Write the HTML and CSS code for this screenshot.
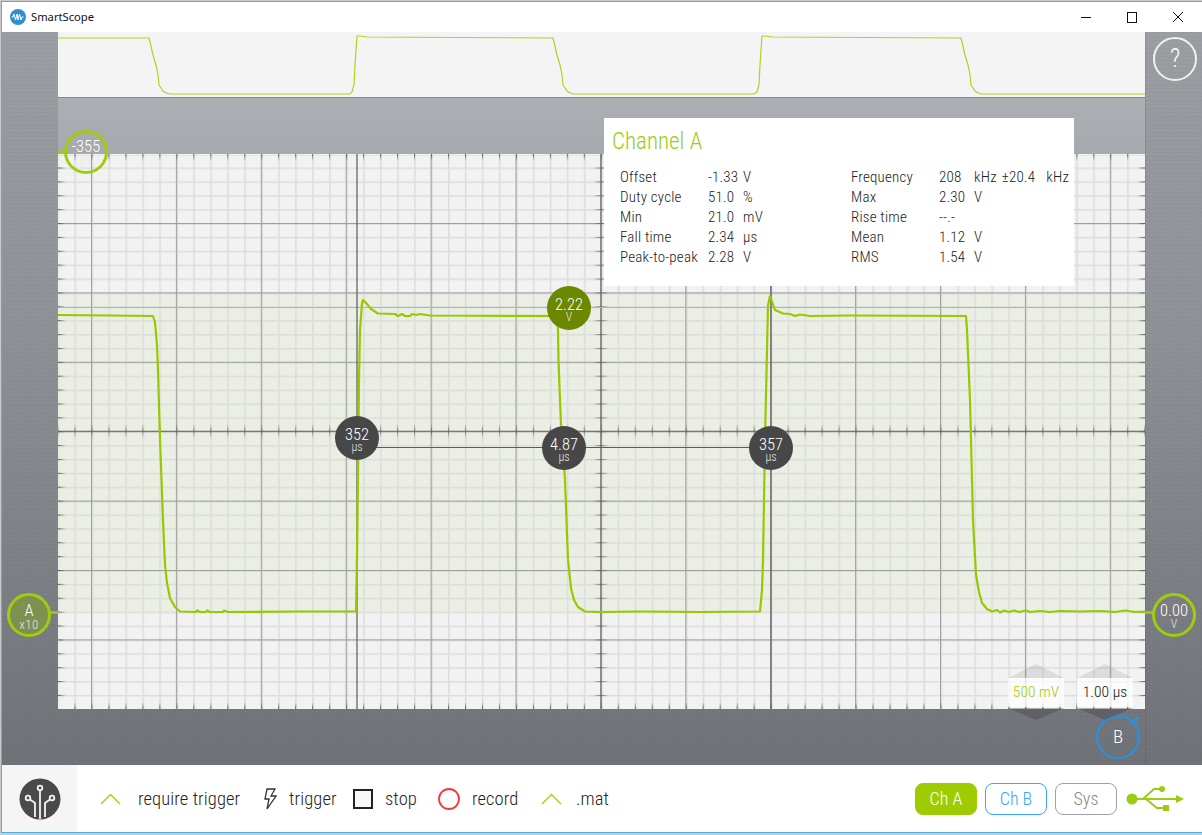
FILE: index.html
```html
<!DOCTYPE html>
<html lang="en">
<head>
<meta charset="utf-8">
<title>SmartScope</title>
<link rel="stylesheet" href="styles.css">
</head>
<body>
<div class="window">
  <header class="titlebar">
    <svg class="appicon" width="16" height="16" viewBox="0 0 16 16"><circle cx="8" cy="8" r="8" fill="#2f8fd0"/><path d="M1.500 8h1.500l1-3 1.500 6 1.500-6 1 6 1.500-6 1.500 6 1-3h1.500" fill="none" stroke="#fff" stroke-width="1"/></svg>
    <span class="apptitle">SmartScope</span>
    <div class="winbtns">
      <svg width="46" height="30" viewBox="0 0 46 30"><path d="M17 15.500h10" stroke="#111" fill="none"/></svg>
      <svg width="46" height="30" viewBox="0 0 46 30"><rect x="17.500" y="10.500" width="9" height="10" stroke="#111" fill="none"/></svg>
      <svg width="46" height="30" viewBox="0 0 46 30"><path d="M17 10l10 10M27 10l-10 10" stroke="#111" fill="none"/></svg>
    </div>
  </header>

  <main class="scope">
    <div class="rail rail-left"></div>
    <div class="center">
      <div class="overview">
        <svg width="1087" height="65" viewBox="58 32 1087 65">
          <polyline class="ovtrace" points="58,38 149,38 150,42 153,55 156,65 158,75 159,85 161,88 163,91 166,93 170,94 350,94 352,92 354,85 355,65 356,50 357,36 360,36 367,37 553,38 554,42 557,55 560,65 562,75 563,85 565,88 567,91 570,93 574,94 754,94 757,92 759,85 760,65 761,50 762,36 765,36 772,37 961,38 962,42 965,55 968,65 970,75 971,85 973,88 975,91 978,93 982,94 1145,94"/>
        </svg>
      </div>
      <div class="plot">
        <svg class="plotsvg" width="1087" height="555" viewBox="58 154 1087 555">
          <defs>
            <pattern id="minorV" patternUnits="userSpaceOnUse" x="57.45" y="0" width="16.98" height="20"><rect x="0" y="0" width="1.500" height="20" fill="#dcdcdc"/></pattern>
            <pattern id="minorH" patternUnits="userSpaceOnUse" x="0" y="153.6" width="20" height="13.88"><rect x="0" y="0" width="20" height="1.500" fill="#dcdcdc"/></pattern>
            <pattern id="majorV" patternUnits="userSpaceOnUse" x="91" y="0" width="84.9" height="20"><rect x="0" y="0" width="1.100" height="20" fill="#a0a0a0"/></pattern>
            <pattern id="majorH" patternUnits="userSpaceOnUse" x="0" y="153.6" width="20" height="69.4"><rect x="0" y="0" width="20" height="1.100" fill="#a0a0a0"/></pattern>
            <linearGradient id="fadeDown" x1="0" x2="0" y1="0" y2="1"><stop offset="0" stop-color="#555"/><stop offset="1" stop-color="#555" stop-opacity="0"/></linearGradient>
            <linearGradient id="fadeUp" x1="0" x2="0" y1="1" y2="0"><stop offset="0" stop-color="#555"/><stop offset="1" stop-color="#555" stop-opacity="0"/></linearGradient>
            <linearGradient id="fadeRight" x1="0" x2="1" y1="0" y2="0"><stop offset="0" stop-color="#555"/><stop offset="1" stop-color="#555" stop-opacity="0"/></linearGradient>
            <linearGradient id="fadeLeft" x1="1" x2="0" y1="0" y2="0"><stop offset="0" stop-color="#555"/><stop offset="1" stop-color="#555" stop-opacity="0"/></linearGradient>
            <linearGradient id="fadeMidV" x1="0" x2="0" y1="0" y2="1"><stop offset="0" stop-color="#555" stop-opacity="0"/><stop offset=".5" stop-color="#555" stop-opacity=".8"/><stop offset="1" stop-color="#555" stop-opacity="0"/></linearGradient>
            <linearGradient id="fadeMidH" x1="0" x2="1" y1="0" y2="0"><stop offset="0" stop-color="#555" stop-opacity="0"/><stop offset=".5" stop-color="#555" stop-opacity=".8"/><stop offset="1" stop-color="#555" stop-opacity="0"/></linearGradient>
            <pattern id="tickTop" patternUnits="userSpaceOnUse" x="57.45" y="154" width="16.98" height="555"><rect width="1.100" height="7" fill="url(#fadeDown)"/></pattern>
            <pattern id="tickBottom" patternUnits="userSpaceOnUse" x="57.45" y="154" width="16.98" height="555"><rect y="548" width="1.100" height="7" fill="url(#fadeUp)"/></pattern>
            <pattern id="tickLeft" patternUnits="userSpaceOnUse" x="58" y="153.6" width="1087" height="13.88"><rect width="8" height="1.100" fill="url(#fadeRight)"/></pattern>
            <pattern id="tickRight" patternUnits="userSpaceOnUse" x="58" y="153.6" width="1087" height="13.88"><rect x="1079" width="8" height="1.100" fill="url(#fadeLeft)"/></pattern>
            <pattern id="tickAxisH" patternUnits="userSpaceOnUse" x="57.45" y="424" width="16.98" height="14"><rect width="1.100" height="14" fill="url(#fadeMidV)"/></pattern>
            <pattern id="tickAxisV" patternUnits="userSpaceOnUse" x="593" y="153.6" width="16" height="13.88"><rect width="16" height="1.100" fill="url(#fadeMidH)"/></pattern>
          </defs>
          <rect x="58" y="154" width="1087" height="555" fill="#f2f2f2"/>
          <rect x="58" y="293" width="1087" height="319" fill="#ebeee3"/>
          <rect x="59" y="155" width="1085" height="553" fill="url(#minorV)"/>
          <rect x="59" y="155" width="1085" height="553" fill="url(#minorH)"/>
          <rect x="59" y="155" width="1085" height="553" fill="url(#majorV)"/>
          <rect x="59" y="155" width="1085" height="553" fill="url(#majorH)"/>
          <rect x="59" y="154" width="1085" height="555" fill="url(#tickTop)"/>
          <rect x="59" y="154" width="1085" height="555" fill="url(#tickBottom)"/>
          <rect x="58" y="155" width="1087" height="553" fill="url(#tickLeft)"/>
          <rect x="58" y="155" width="1087" height="553" fill="url(#tickRight)"/>
          <rect x="58" y="424" width="1087" height="14" fill="url(#tickAxisH)"/>
          <rect x="593" y="155" width="16" height="553" fill="url(#tickAxisV)"/>
          <path class="axis" d="M58 431.200H1145M601 154V709"/>
          <path class="levelline" d="M58 307.500H1145"/>
          <path class="cursorline" d="M357 154V709M771 154V709M357 447.500H771"/>
          <polyline class="trace" points="58,315 110,315.500 153,316 155,322 157,345 158,370 160,440 163,520 165,565 167,583 170,598 175,607 180,611.500 196,612 197,610.500 200,612 206,612 207,610.500 210,612 223,612 224,610.500 228,612 300,611.500 356,611.500 357,556 358,480 359,380 360,330 362,303 363,300 367,304 371,309 378,313.500 395,314 398,316 402,314 405,316 410,316 412,314 416,315 420,314 430,315.500 557,316 558,330 558.500,360 560,400 561,425 563,450 565,480 568,560 571,588 574,600 578,607 585,611.500 600,612 640,611.500 700,612 760,611.500 762,590 763,560 765,440 767,350 768,305 770,296 775,310 783,313.500 790,314 795,316 800,314.500 810,316 850,315.500 966,316 967,330 970,400 973,520 976,575 979,592 982,603 987,609 992,611.500 997,610 1000,612.500 1004,610.500 1009,612 1014,610.500 1019,612 1026,610.500 1030,612 1040,611 1050,612 1060,611 1080,611.500 1100,611 1115,612 1125,610.500 1135,612 1145,611.500"/>
        </svg>
      </div>
      <div class="plotgap"></div>
    </div>
    <div class="rail rail-right"></div>

    <svg class="stubs" width="1200" height="733" viewBox="2 32 1200 733">
      <path d="M50 612.500h8M1145 612.500h8M58 152h7" stroke="#a0cc10" stroke-width="2.500" fill="none"/>
      <path d="M1132 724l6-7" stroke="#1f95ea" stroke-width="2.500" fill="none"/>
    </svg>

    <section class="info">
      <h2 class="info-title">Channel A</h2>
      <div class="info-grid">
        <dl class="stats">
          <dt>Offset</dt><dd>-1.33</dd><dd class="u">V</dd>
          <dt>Duty cycle</dt><dd>51.0</dd><dd class="u">%</dd>
          <dt>Min</dt><dd>21.0</dd><dd class="u">mV</dd>
          <dt>Fall time</dt><dd>2.34</dd><dd class="u">µs</dd>
          <dt>Peak-to-peak</dt><dd>2.28</dd><dd class="u">V</dd>
        </dl>
        <dl class="stats">
          <dt>Frequency</dt><dd>208</dd><dd class="u">kHz<span class="pm">±20.4</span><span class="pmu">kHz</span></dd>
          <dt>Max</dt><dd>2.30</dd><dd class="u">V</dd>
          <dt>Rise time</dt><dd>--.-</dd><dd class="u"></dd>
          <dt>Mean</dt><dd>1.12</dd><dd class="u">V</dd>
          <dt>RMS</dt><dd>1.54</dd><dd class="u">V</dd>
        </dl>
      </div>
    </section>

    <div class="marker help"><span class="big">?</span></div>
    <div class="marker ring trig"><span class="num">-355</span><span class="unit">µs</span></div>
    <div class="marker ring chA"><span class="num">A</span><span class="unit wide">x10</span></div>
    <div class="marker ring off"><span class="num">0.00</span><span class="unit">V</span></div>
    <div class="marker level"><span class="num">2.22</span><span class="unit">V</span></div>
    <div class="marker dark c1"><span class="num">352</span><span class="unit">µs</span></div>
    <div class="marker dark c2"><span class="num">4.87</span><span class="unit">µs</span></div>
    <div class="marker dark c3"><span class="num">357</span><span class="unit">µs</span></div>
    <div class="marker chB"><span class="bee">B</span></div>

    <div class="stepper volt"><i class="arrow up"></i><span class="val green">500 mV</span><i class="arrow down"></i></div>
    <div class="stepper time"><i class="arrow up"></i><span class="val">1.00 µs</span><i class="arrow down"></i></div>
  </main>

  <footer class="toolbar">
    <div class="logo">
      <svg width="42" height="42" viewBox="0 0 42 42"><circle cx="21" cy="21" r="20.500" fill="#4a4a4a"/><g fill="none" stroke="#f5f5f5" stroke-width="1.800"><circle cx="21" cy="10" r="2.300"/><path d="M21 12.500V41"/><circle cx="9" cy="20" r="2.300"/><path d="M11 21.500l5 3.500V39"/><circle cx="33" cy="20" r="2.300"/><path d="M31 21.500l-5 3.500V39"/></g></svg>
    </div>
    <div class="tools">
      <div class="tool"><span class="slot s1"><svg width="21" height="12" viewBox="0 0 21 12"><path d="M1 11l9.500-9.500L20 11" class="ico-green"/></svg></span><span>require trigger</span></div>
      <div class="tool"><span class="slot s2"><svg width="14" height="22" viewBox="0 0 14 22"><path d="M4 1h8L8 8h5L4 21l2-10H2z" class="ico-dark"/></svg></span><span>trigger</span></div>
      <div class="tool"><span class="slot s3"><svg width="20" height="20" viewBox="0 0 20 20"><rect x="1" y="1" width="18" height="18" class="ico-square"/></svg></span><span>stop</span></div>
      <div class="tool"><span class="slot s4"><svg width="22" height="22" viewBox="0 0 22 22"><circle cx="11" cy="11" r="10" class="ico-red"/></svg></span><span>record</span></div>
      <div class="tool"><span class="slot s5"><svg width="21" height="12" viewBox="0 0 21 12"><path d="M1 11l9.500-9.500L20 11" class="ico-green"/></svg></span><span>.mat</span></div>
    </div>
    <div class="channels">
      <button class="chbtn on">Ch A</button>
      <button class="chbtn blue">Ch B</button>
      <button class="chbtn grey">Sys</button>
      <svg class="usb" width="58" height="28" viewBox="0 0 58 28"><circle cx="6" cy="14" r="5.500" fill="#9ccb10"/><path d="M6 14h44M17 14l11-10h6M20 14l11 9h6" fill="none" stroke="#9ccb10" stroke-width="2"/><circle cx="36" cy="4" r="3" fill="#9ccb10"/><rect x="37" y="20" width="6" height="6" fill="#9ccb10"/><path d="M50 10l8 4-8 4z" fill="#9ccb10"/></svg>
    </div>
  </footer>
</div>
</body>
</html>
```
FILE: styles.css
```css
* { box-sizing: border-box; }
html, body { margin: 0; height: 100%; }
body {
  width: 1202px;
  height: 835px;
  overflow: hidden;
  background: #c9c9c9;
  font-family: "Roboto", "Liberation Sans", sans-serif;
  font-stretch: 75%;
}
.window {
  margin: 1px 0 0 1px;
  width: 1201px;
  height: 832px;
  border: solid #4fb3e2;
  border-width: 1px 0 1px 1px;
  background: #fff;
  display: flex;
  flex-direction: column;
}
.titlebar {
  flex: 0 0 30px;
  display: flex;
  align-items: center;
  background: #fff;
  padding-left: 8px;
}
.appicon { display: block; margin-top: -1px; }
.apptitle {
  margin-left: 5px;
  font: 11.200px "Noto Sans", "Open Sans", sans-serif;
  color: #111;
  margin-top: -1px;
}
.winbtns { margin-left: auto; display: flex; }
.winbtns svg { display: block; }

.scope {
  position: relative;
  flex: 0 0 733px;
  display: flex;
  background:
    repeating-linear-gradient(90deg, rgba(255,255,255,.025) 0 1px, transparent 1px 3px),
    repeating-linear-gradient(0deg, rgba(0,0,0,.025) 0 1px, transparent 1px 4px),
    linear-gradient(#9a9da2 0, #8d9095 300px, #76797e 620px, #6e7176 733px);
}
.rail-left { flex: 0 0 56px; }
.rail-right { flex: 1 1 auto; box-shadow: inset 1px 0 0 rgba(0,0,0,.08); }
.center {
  flex: 0 0 1087px;
  display: flex;
  flex-direction: column;
  background: linear-gradient(#acafb4 60px, #a6a9ae 122px, rgba(166,169,174,0) 380px);
}
.overview {
  flex: 0 0 66px;
  background: #f4f4f4;
  border-bottom: 1px solid #888;
}
.overview svg, .plotsvg { display: block; }
.ovtrace { fill: none; stroke: #a8d620; stroke-width: 1.200; }
.plot { margin-top: 56px; flex: 0 0 555px; }
.plotgap { flex: 1 1 auto; }
.axis { fill: none; stroke: #666; stroke-width: 1.100; }
.levelline { fill: none; stroke: #a9cf3c; stroke-width: 1; }
.cursorline { fill: none; stroke: #5c5c5c; stroke-width: 1.200; }
.trace { fill: none; stroke: #98c800; stroke-width: 2.200; stroke-linejoin: round; }
.stubs { position: absolute; left: 0; top: 0; pointer-events: none; }

.info {
  position: absolute;
  left: 602px;
  top: 86px;
  width: 470px;
  height: 168px;
  background: #fff;
  padding: 10px 5px 0 16px;
}
.info-title {
  margin: 0 0 0 -8px;
  font-size: 23px;
  font-weight: 300;
  line-height: 28px;
  color: #9ccd10;
}
.info-grid {
  margin-top: 11px;
  display: grid;
  grid-template-columns: 231px 1fr;
}
.stats {
  margin: 0;
  display: grid;
  grid-template-columns: 88px 35px 1fr;
  grid-auto-rows: 20px;
  font-size: 15px;
  line-height: 20px;
  color: #222;
  font-weight: 300;
  letter-spacing: .2px;
  white-space: nowrap;
}
.stats dt, .stats dd { margin: 0; }
.pm { margin-left: 5px; }
.pmu { margin-left: 11px; }

.marker {
  position: absolute;
  width: 44px;
  height: 44px;
  border-radius: 50%;
  display: flex;
  flex-direction: column;
  align-items: center;
  justify-content: center;
  padding-top: 4px;
  color: #fff;
  text-align: center;
}
.num { font-size: 16.500px; line-height: 15px; font-weight: 300; }
.unit { font-size: 12px; line-height: 11px; font-weight: 300; color: #e6e6e6; }
.big { font-size: 25px; line-height: 28px; font-weight: 300; }
.bee { font-size: 19px; line-height: 20px; font-weight: 300; }
.ring { border: 3px solid #a0cc10; padding-top: 2px; }
.ring .unit { margin-top: 1px; }
.help { left: 1151px; top: 5px; border: 2.500px solid #f2f2f2; padding-top: 0; }
.trig { left: 62px; top: 98px; padding-top: 0; }
.chA { left: 5px; top: 561px; background: #7f9150; }
.off { left: 1150px; top: 561px; }
.level { left: 545px; top: 254px; background: #6b8800; }
.dark { background: #474747; }
.c1 { left: 333px; top: 384px; }
.c2 { left: 540px; top: 394px; }
.c3 { left: 747px; top: 394px; }
.chB { left: 1094px; top: 683px; border: 2.500px solid #1f95ea; padding-top: 0; }
.wide { letter-spacing: .5px; font-size: 13px; }

.stepper {
  position: absolute;
  top: 632px;
  width: 56px;
  display: flex;
  flex-direction: column;
  align-items: center;
}
.volt { left: 1006px; }
.time { left: 1075px; }
.arrow {
  width: 0;
  height: 0;
  border-left: 28px solid transparent;
  border-right: 28px solid transparent;
}
.up { border-bottom: 14px solid rgba(120,120,120,.18); }
.down { border-top: 12px solid rgba(60,60,65,.35); margin-top: 1px; }
.val {
  width: 56px;
  height: 29px;
  background: rgba(255,255,255,.72);
  font-size: 15.500px;
  line-height: 29px;
  text-align: center;
  color: #111;
  font-weight: 300;
}
.val.green { color: #9ccd10; }

.toolbar {
  flex: 1 1 auto;
  display: flex;
  background: #fff;
}
.logo {
  flex: 0 0 75px;
  background: #f5f5f5;
  display: flex;
  align-items: center;
  justify-content: center;
}
.logo svg { display: block; margin-left: 1px; }
.tools {
  margin-left: 23px;
  display: grid;
  grid-template-columns: 163px 90px 85px 103px auto;
  align-items: center;
  font-size: 18.500px;
  font-weight: 300;
  letter-spacing: .1px;
  color: #222;
  padding-top: 1px;
}
.tool { display: flex; align-items: center; }
.slot { display: flex; align-items: center; }
.slot svg { display: block; }
.s1 { width: 38px; }
.s2 { width: 26px; }
.s3 { width: 32px; }
.s4 { width: 34px; }
.s5 { width: 35px; }
.ico-green { fill: none; stroke: #a8d420; stroke-width: 1.500; }
.ico-dark { fill: none; stroke: #333; stroke-width: 1.300; }
.ico-square { fill: #f7f7f7; stroke: #222; stroke-width: 2; }
.ico-red { fill: none; stroke: #f4393c; stroke-width: 1.800; }

.channels {
  margin-left: auto;
  display: flex;
  align-items: center;
  gap: 8px;
  padding-right: 18px;
}
.chbtn {
  width: 62px;
  height: 32px;
  padding: 0;
  border-radius: 8px;
  border: 1.500px solid;
  background: #fff;
  font-family: inherit;
  font-stretch: 75%;
  font-size: 18px;
  font-weight: 300;
  line-height: 28px;
}
.on { background: #9ecc00; border-color: #9ecc00; color: #fff; }
.blue { border-color: #3aa5f5; color: #3aa5f5; }
.grey { border-color: #a0a0a0; color: #888; }
.usb { display: block; margin-left: 1px; }
```
